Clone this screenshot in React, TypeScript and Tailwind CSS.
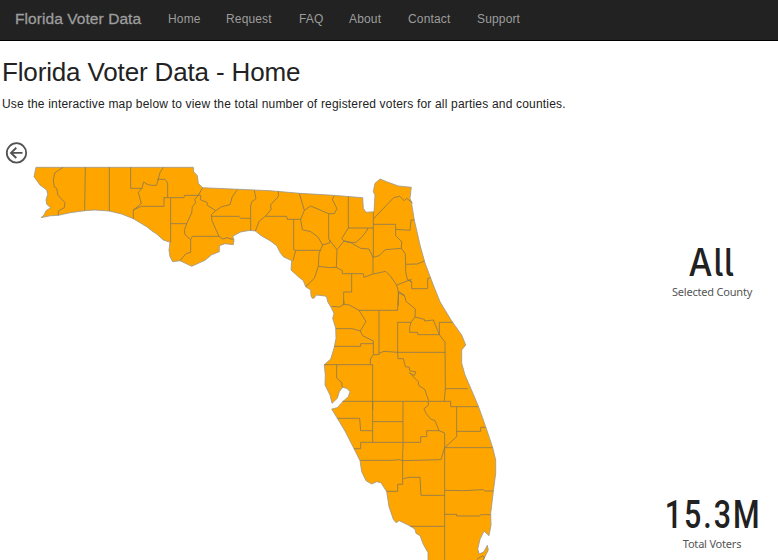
import React from "react";

const navItems = [
  { label: "Home", style: "w-[58px]" },
  { label: "Request", style: "w-[73px]" },
  { label: "FAQ", style: "w-[50px]" },
  { label: "About", style: "w-[59px]" },
  { label: "Contact", style: "w-[69px]" },
  { label: "Support", style: "w-[60px]" },
];

const coast =
  "M36 167.3L34 176.7L40 185L46.7 190L47.7 194.3L46 200L46.7 204.3L50.7 207.7L46 210.7L44 215L41 217.7L50 215.8L58.3 215.3L70 212.7L85 210.7L95 210L109 211L121.7 214L133.3 218.7L146.7 226.7L151.7 230.7L156.7 234L163.3 240L170 242.3L169 250L170 256.7L172.7 261.7L180 260.7L191.7 266.3L205 260.3L211.7 254.7L219.3 251.7L219.3 245.7L225 243.7L233.3 244.7L234 239.7L232.7 236.3L240.7 232L250 230.3L255.3 231L261.7 236L270 240.7L276.7 245.7L280 252.3L283.3 256.7L291.7 260.7L291 270L298.3 276.7L303.3 280.7L305.7 286.7L310.7 290L311 296L312.3 298.3L314.3 298L316 295L325 296L326.7 297L327.7 301.7L331 307.3L334 313.3L332.7 318.3L335.7 328.3L336 338.3L334 348.3L330.7 359L324.3 364.7L325.3 375L325 385L330 395L332 403.3L337.3 398.3L339.3 391.7L342.7 387.3L347 388.5L350 391.7L348.3 396.7L342.7 401.7L337.3 407.7L331.7 409L337.3 418.3L345 431L354 448.7L360 460.7L361.7 471.7L366 480.7L371.7 484L376.7 481.7L381 482.7L386.7 491.7L389 506.7L393.3 519.3L396 522.7L399.3 520.7L410.7 526.3L415 529.3L416 533.3L420 535.7L423.3 544.3L428 552.7L428 565L480 565L485 556.7L488.3 550L487.3 545.3L484 551.7L479.3 554L477.7 549L480 539.3L484 531L489 535.7L491 525L490.7 513.3L493.3 491.7L495.7 473.3L495.7 460L492.7 447.7L485.7 426.7L478.3 406L470 386.5L465 375L461.7 363.3L461.7 350L465.7 345L461.7 335L451.7 321L440 301.7L433.3 285L425 263L420 245L414.3 220L411.3 201.7L410 198.3L411.3 187.3L398.3 186L386.7 181.7L380 179L375 183.3L373.3 191.7L375 195L374 211.7L366 212.3L363.3 208.3L362.7 197.7L333.3 195.3L299.3 193.3L270 190.7L202.7 187.7L198.3 183.3L197.3 175.7L193.7 171.7L193.3 167.3Z";

/* County borders, drawn at three units per map pixel in each region. */
const regions = [
  {
    transform: "translate(30 155) scale(.33333)",
    d: "M99 37L74 54L70 77L73 96L80 100L84 121L105 143L103 158L85 168V181M166 37L164 167M238 37V168M302 37V100H336L325 112L334 146L310 165V191M310 165L334 154H402V127M336 100L341 81L354 89L365 91H380",
  },
  {
    transform: "translate(150 155) scale(.33333)",
    d: "M40 37L30 53L20 90M22 73H45L53 84V128M42 128H102L104 121H145L158 98M62 128V262M62 206H110M145 121H152V135L171 142L172 151L197 167L184 179L186 197L207 244H127L122 254L105 239L103 226L110 206L125 174L127 155L137 143L134 133L145 121M122 254V292L108 296L90 317M207 244L219 252L231 248L250 254M197 167L215 155L240 149L247 125L262 104M186 184H267L272 190H302V227M313 107L318 131L305 141L302 153V190M316 228L328 198L346 184H360M346 184L363 164L362 149L385 125V108",
  },
  {
    transform: "translate(270 170) scale(.33333)",
    d: "M0 139H50L52 148H92L97 179L122 185L143 200L158 225L152 239L147 250L145 289L133 325L107 350M71 148L71 239L77 241L69 272M77 241H152M92 148L103 121L88 70M103 121L122 108L176 131H193L201 116L187 88L193 77M176 131V207L201 239L222 213L240 217H258L275 202L292 180V174H310M235 80V174L215 206L222 213M235 174H292M158 225L180 218L179 209M201 239L199 293M145 289L180 293L198 292L217 302V311H280L282 322L309 312V262L297 237L272 235L244 219L222 213M310 127V262L327 257L346 239L394 235L395 215L377 197V163H310M310 147L371 83L389 79L403 92L410 85L428 99M377 178L420 181L423 150H433M394 235L406 252L407 283L442 282L463 273M407 283V305L412 328L425 335V356H473V326L482 323M425 335L412 330M425 328L380 345L362 319L347 304L310 312M380 345L385 364L404 376M385 364V407M245 311V366H221V405",
  },
  {
    transform: "translate(310 285) scale(.33333)",
    d: "M102 58L88 66L65 64M102 58L118 60L147 76H263V62L266 23M102 58V48M147 76L168 109L151 138L126 131H77M151 138L158 152L190 168V209H207V76M73 184H152V176H190M43 239H188V375M80 239V279L95 293L97 307M181 239V222L190 209M207 205L222 199L263 202V112H303M263 202H406M263 202L264 221H280L286 245L298 247L299 257L318 261L313 271L307 269L298 263L324 289L327 302L344 313L356 347M303 112L299 127V142H323V149H388L370 105L344 108L343 103L315 96L303 112M315 96L316 72L288 49L284 33L266 23M388 149V112H428M388 149L405 171L406 311L403 349M406 311H473M97 349H345",
  },
  {
    transform: "translate(320 370) scale(.33333)",
    d: "M52 145H119L122 182H158M158 94V217M158 155H249M102 236H122V217H302V200H320V182H357L374 189V240M249 94V240M315 94H392V110H475M325 94V106L312 116L318 130L332 147L345 152L357 182M410 110V200L374 233H518M374 233L363 269L249 272L238 269L215 271H121M410 184H482V172H497",
  },
  {
    transform: "translate(340 450) scale(.33333)",
    d: "M188 0V103H173V124H140M190 86L207 82H240L243 136H314M314 0V330M314 121L370 122L430 119L434 123H460M314 193H350V198H419L422 194H452M210 229H314M410 328L427 318L433 321L431 330",
  },
];

function BackButton() {
  return (
    <button aria-label="Back" className="ml-[5px] block h-[23px] w-[23px]">
      <svg width="23" height="23" viewBox="0 0 23 23" fill="none" stroke="#525252">
        <circle cx="11.5" cy="10.9" r="9.7" strokeWidth="1.8" />
        <path d="M17.5 10.9H6.5M11.3 5.8L6 10.9L11.3 16" strokeWidth="1.9" />
      </svg>
    </button>
  );
}

function FloridaMap() {
  return (
    <svg className="block h-[396px] w-[510px] shrink-0" viewBox="0 164 510 396">
      <path d={coast} fill="#ffa500" stroke="#9a978c" strokeWidth=".8" />
      {regions.map((r) => (
        <path
          key={r.transform}
          d={r.d}
          transform={r.transform}
          fill="none"
          stroke="#8a7a52"
          strokeWidth="2.5"
          strokeLinejoin="round"
        />
      ))}
    </svg>
  );
}

function Metric({ value, label, valueClass }: { value: string; label: string; valueClass: string }) {
  return (
    <div className="flex w-[132px] flex-col items-center">
      <div className={"h-[40px] whitespace-nowrap leading-[42px] text-[#212121] " + valueClass}>
        {value}
      </div>
      <div className="h-[20px] whitespace-nowrap font-['Noto_Sans',sans-serif] text-[11px] leading-[20px] tracking-[-0.2px] text-[#555]">
        {label}
      </div>
    </div>
  );
}

export default function App() {
  return (
    <div className="h-[560px] w-[778px] overflow-hidden bg-white font-['Liberation_Sans',Arial,sans-serif] text-[#222]">
      <nav className="flex h-[41px] border-b border-black bg-[#222] pl-[15px] text-[#9d9d9d]">
        <a className="w-[153px] whitespace-nowrap text-[15.5px] leading-[37px] tracking-[0.07px] [-webkit-text-stroke:0.3px_#9d9d9d]">Florida Voter Data</a>
        <div className="flex text-[12px] leading-[38px] tracking-[0.15px]">
          {navItems.map((item) => (
            <a key={item.label} className={"shrink-0 " + item.style}>{item.label}</a>
          ))}
        </div>
      </nav>
      <main className="flex flex-col">
        <h1 className="mt-[15px] ml-[2px] h-[32px] text-[26px] leading-[32px] tracking-[-0.15px]">Florida Voter Data - Home</h1>
        <p className="mt-[7px] ml-[2px] h-[18px] whitespace-nowrap text-[12px] leading-[18px] tracking-[0.185px]">
          Use the interactive map below to view the total number of registered voters for all parties and counties.
        </p>
        <div className="h-[51px] pt-[29px]">
          <BackButton />
        </div>
        <div className="flex h-[396px]">
          <FloridaMap />
          <div className="flex w-[268px] flex-col items-end pt-[78px]">
            <Metric value="All" label="Selected County" valueClass="font-['Inter'] text-[37.5px] font-medium tracking-[1px] scale-x-90 [font-feature-settings:'cv05']" />
            <div className="h-[192px]" />
            <Metric value="15.3M" label="Total Voters" valueClass="pl-[4px] font-['Roboto'] text-[38px] font-medium tracking-[2.5px] scale-x-[.8]" />
          </div>
        </div>
      </main>
    </div>
  );
}
